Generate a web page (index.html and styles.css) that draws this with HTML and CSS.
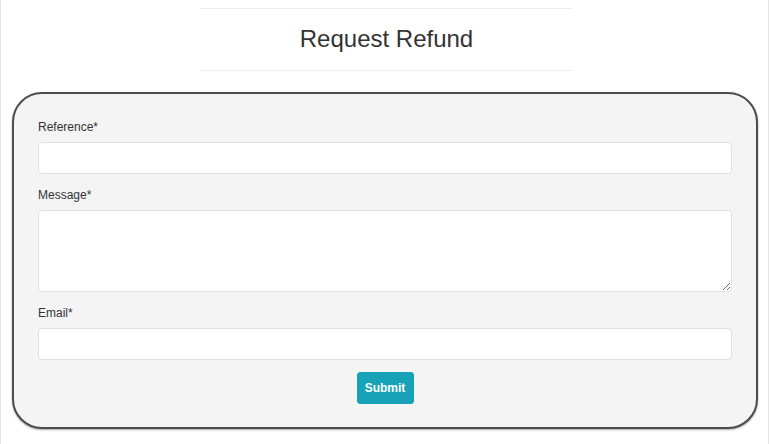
FILE: index.html
```html
<!DOCTYPE html>
<html lang="en">
<head>
<meta charset="utf-8">
<title>Request Refund</title>
<link rel="stylesheet" href="styles.css">
</head>
<body>
<div class="page">
  <header class="heading">
    <h1 class="title">Request Refund</h1>
  </header>
  <form class="card">
    <div class="field">
      <label class="label" for="ref">Reference*</label>
      <input class="input" id="ref" type="text">
    </div>
    <div class="field">
      <label class="label" for="msg">Message*</label>
      <textarea class="input textarea" id="msg"></textarea>
    </div>
    <div class="field">
      <label class="label" for="email">Email*</label>
      <input class="input" id="email" type="email">
    </div>
    <div class="actions">
      <button class="btn" type="button">Submit</button>
    </div>
  </form>
</div>
</body>
</html>
```
FILE: styles.css
```css
* { box-sizing: border-box; }
html, body { margin: 0; padding: 0; background: #fff; }
body {
  font-family: "Liberation Sans", Arial, sans-serif;
  color: #333;
}
.page {
  width: 769px;
  height: 444px;
  border-left: 1px solid #e4e4e4;
  border-right: 1px solid #e4e4e4;
  padding: 8px 10px 0 11px;
}
.heading {
  width: 373px;
  margin: 0 auto 0 188px;
  border-top: 1px solid #ededed;
  border-bottom: 1px solid #ededed;
  height: 63px;
  padding-bottom: 2px;
  display: flex;
  align-items: center;
  justify-content: center;
}
.title {
  margin: 0;
  font-weight: normal;
  font-size: 24px;
  color: #333;
  line-height: 28px;
}
.card {
  margin-top: 21px;
  width: 746px;
  border: 2px solid #4d4d4d;
  border-radius: 30px;
  background: #f4f4f4;
  box-shadow: 0 1px 2px rgba(0,0,0,0.35);
  padding: 25px 24px 23px 24px;
  display: flex;
  flex-direction: column;
  gap: 13px;
}
.field { display: flex; flex-direction: column; gap: 6px; }
.label {
  font-size: 12px;
  line-height: 17px;
  color: #333;
}
.input {
  display: block;
  width: 100%;
  height: 32px;
  border: 1px solid #dfe1e3;
  border-radius: 4px;
  background: #fff;
  font-family: inherit;
  font-size: 12px;
  padding: 4px 8px;
  margin: 0;
}
.textarea { height: 82px; resize: vertical; }
.actions { display: flex; justify-content: center; margin-top: -1px; }
.btn {
  height: 32px;
  width: 57px;
  border: 1px solid #17a2b8;
  border-radius: 3px;
  background: #17a2b8;
  color: #fff;
  font-family: inherit;
  font-weight: bold;
  font-size: 12px;
  padding: 0;
}
```
